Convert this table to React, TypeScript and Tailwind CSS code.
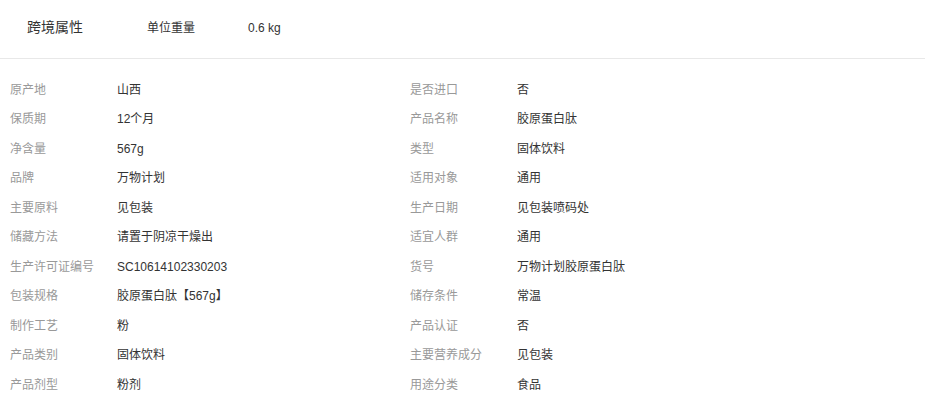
const rows: [string, string, string, string][] = [
  ["原产地", "山西", "是否进口", "否"],
  ["保质期", "12个月", "产品名称", "胶原蛋白肽"],
  ["净含量", "567g", "类型", "固体饮料"],
  ["品牌", "万物计划", "适用对象", "通用"],
  ["主要原料", "见包装", "生产日期", "见包装喷码处"],
  ["储藏方法", "请置于阴凉干燥出", "适宜人群", "通用"],
  ["生产许可证编号", "SC10614102330203", "货号", "万物计划胶原蛋白肽"],
  ["包装规格", "胶原蛋白肽【567g】", "储存条件", "常温"],
  ["制作工艺", "粉", "产品认证", "否"],
  ["产品类别", "固体饮料", "主要营养成分", "见包装"],
  ["产品剂型", "粉剂", "用途分类", "食品"],
];

function Cell({ label, value }: { label: string; value: string }) {
  return (
    <div className="flex h-[29.5px] items-center text-[12px]">
      <span className="w-[107px] shrink-0 text-[#999]">{label}</span>
      <span className="text-[#333]">{value}</span>
    </div>
  );
}

export default function App() {
  return (
    <div
      className="w-[925px] h-[402px] overflow-hidden bg-white"
      style={{ fontFamily: '"Liberation Sans", "Noto Sans CJK SC", sans-serif' }}
    >
      {/* header strip */}
      <div className="flex h-[59px] items-center border-b border-[#e8e8e8] pb-[3px] text-[#333]">
        <span className="ml-[27px] w-[120px] text-[14px]">跨境属性</span>
        <span className="w-[101px] text-[12px]">单位重量</span>
        <span className="text-[12px]">0.6 kg</span>
      </div>

      {/* spec table */}
      <div className="pt-[16px] pl-[10px]">
        {rows.map(([l1, v1, l2, v2]) => (
          <div key={l1} className="grid grid-cols-[400px_1fr]">
            <Cell label={l1} value={v1} />
            <Cell label={l2} value={v2} />
          </div>
        ))}
      </div>
    </div>
  );
}
